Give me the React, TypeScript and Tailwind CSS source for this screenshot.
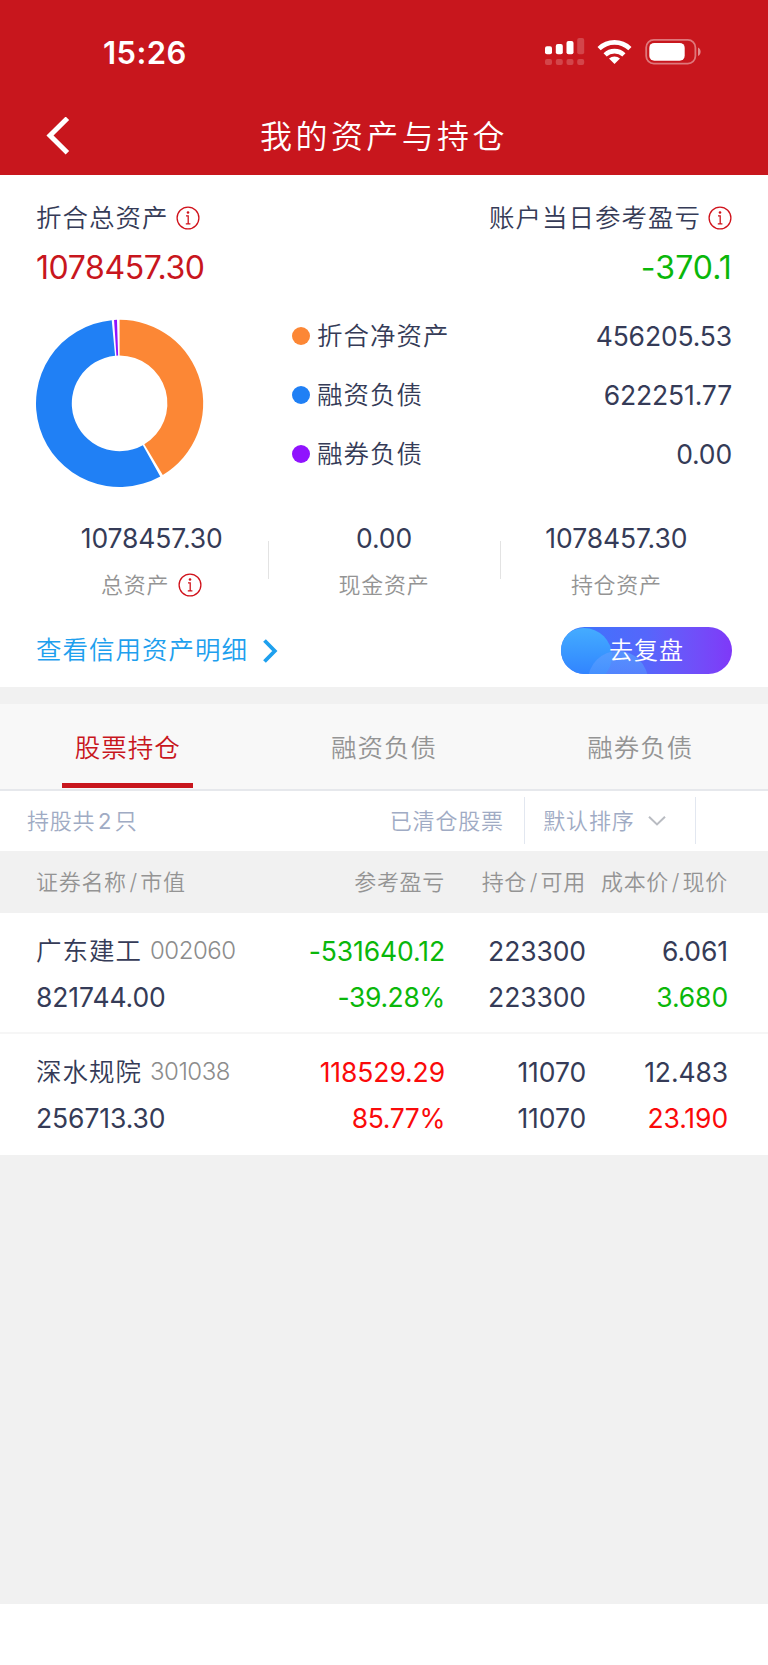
import React from "react";

interface Holding {
	name: string;
	code: string;
	value: string;
	profit: string;
	percent: string;
	amount: string;
	available: string;
	cost: string;
	price: string;
	profitColor: string;
	priceColor: string;
}

const holdings: Holding[] = [
	{
		name: "广东建工",
		code: "002060",
		value: "821744.00",
		profit: "-531640.12",
		percent: "-39.28%",
		amount: "223300",
		available: "223300",
		cost: "6.061",
		price: "3.680",
		profitColor: "text-[#0ab70a]",
		priceColor: "text-[#0ab70a]",
	},
	{
		name: "深水规院",
		code: "301038",
		value: "256713.30",
		profit: "118529.29",
		percent: "85.77%",
		amount: "11070",
		available: "11070",
		cost: "12.483",
		price: "23.190",
		profitColor: "text-[#fa0a0a]",
		priceColor: "text-[#fa0a0a]",
	},
];

const legend = [
	{ label: "折合净资产", value: "456205.53", dot: "bg-[#fc8735]" },
	{ label: "融资负债", value: "622251.77", dot: "bg-[#2080f5]" },
	{ label: "融券负债", value: "0.00", dot: "bg-[#9013fe]" },
];

const slices = [
	{ from: 0, to: 148.9, color: "#fc8735" },
	{ from: 150.9, to: 354.6, color: "#2080f5" },
	{ from: 356.2, to: 358.2, color: "#9013fe" },
];

const point = (radius: number, angle: number) => {
	const rad = (angle * Math.PI) / 180;
	return `${83.6 + radius * Math.sin(rad)} ${84.4 - radius * Math.cos(rad)}`;
};

const slicePath = (from: number, to: number) => {
	const large = to - from > 180 ? 1 : 0;
	return `M${point(83.6, from)}A83.6 83.6 0 ${large} 1 ${point(83.6, to)}L${point(47.8, to)}A47.8 47.8 0 ${large} 0 ${point(47.8, from)}Z`;
};

const Donut = () => (
	<svg className="size-[168px] shrink-0 overflow-visible" viewBox="0 0 168 168">
		{slices.map((s) => (
			<path key={s.color} d={slicePath(s.from, s.to)} fill={s.color} />
		))}
	</svg>
);

const InfoIcon = () => (
	<svg
		className="size-6 shrink-0"
		viewBox="0 0 24 24"
		fill="none"
		stroke="#d0121b"
		strokeWidth="1.3"
	>
		<circle cx="12" cy="12" r="10.9" />
		<circle cx="12" cy="6.5" r="1.3" fill="#d0121b" stroke="none" />
		<path d="M10 9.8h2.2v7.8M9.8 17.9h4.6" />
	</svg>
);

const StatusBar = () => (
	<div className="flex h-[104px] items-center pl-[103px] pr-[66px]">
		<span className="text-[31px] leading-none font-semibold tracking-[0.4px]">
			15:26
		</span>
		<svg className="ml-auto h-7 w-[158px]" viewBox="0 0 158 28" fill="#fff">
			<rect x="1" y="8.3" width="7" height="8" rx="2" />
			<rect x="11.8" y="6" width="7" height="10.3" rx="2" />
			<rect x="22.5" y="3" width="7" height="13.3" rx="2" />
			<g opacity="0.2">
				<rect x="33.2" y="0" width="7" height="16.3" rx="2" />
				<rect x="1" y="21" width="7" height="6" rx="2" />
				<rect x="11.8" y="21" width="7" height="6" rx="2" />
				<rect x="22.5" y="21" width="7" height="6" rx="2" />
				<rect x="33.2" y="21" width="7" height="6" rx="2" />
			</g>
			<path d="M70.5 26l-5.5-5.4a8 8 0 0 1 11 0z" />
			<path
				d="M61.1 16.9a13.7 13.7 0 0 1 18.8 0M55.1 10.6a22.2 22.2 0 0 1 30.8 0"
				fill="none"
				stroke="#fff"
				strokeWidth="4.6"
			/>
			<rect
				x="102.2"
				y="1.8"
				width="49.2"
				height="23.9"
				rx="7.6"
				fill="none"
				stroke="#fff"
				strokeOpacity="0.42"
				strokeWidth="1.8"
			/>
			<rect x="105.3" y="4.9" width="35.4" height="17.8" rx="5" />
			<path d="M154 9.6c3.5 1.4 3.5 7 0 8.4z" opacity="0.5" />
		</svg>
	</div>
);

const Header = () => (
	<header className="h-[174.5px] bg-[#c8161d] text-white">
		<StatusBar />
		<div className="flex h-[63px] items-center pl-[46px] pr-[72px]">
			<svg className="h-[38px] w-[26px]" viewBox="0 0 26 38">
				<path
					d="M21.4 1.3L4 18.5l17.4 17.2"
					fill="none"
					stroke="#fff"
					strokeWidth="5"
				/>
			</svg>
			<h1 className="flex-1 pt-0.5 text-center text-[32px] leading-none tracking-[3.4px]">
				我的资产与持仓
			</h1>
		</div>
	</header>
);

interface StatProps {
	value: string;
	label: string;
	info?: boolean;
}

const Stat = ({ value, label, info }: StatProps) => (
	<div className="flex flex-1 flex-col items-center">
		<span className="text-[26.5px] leading-8 font-normal tracking-[-0.1px]">
			{value}
		</span>
		<span className="mt-[15px] flex items-center gap-[9px] text-[22px] leading-8 tracking-[0.7px] text-[#949494]">
			{label}
			{info && <InfoIcon />}
		</span>
	</div>
);

const Summary = () => (
	<section className="h-[512.5px] bg-white px-9 pt-[25px]">
		<div className="flex justify-between">
			<div className="flex flex-col">
				<span className="flex items-center gap-[7px] text-[25.5px] leading-9 tracking-[1px]">
					折合总资产
					<InfoIcon />
				</span>
				<span className="mt-3 text-[32px] leading-10 font-normal tracking-[-0.4px] text-[#c8161d]">
					1078457.30
				</span>
			</div>
			<div className="flex flex-col items-end">
				<span className="flex items-center gap-[7px] text-[25.5px] leading-9 tracking-[1px]">
					账户当日参考盈亏
					<InfoIcon />
				</span>
				<span className="mt-3 text-[32px] leading-10 font-normal tracking-[0.1px] text-[#0ab70a]">
					-370.1
				</span>
			</div>
		</div>
		<div className="mt-[31px] flex">
			<Donut />
			<ul className="-mt-px ml-[88px] flex-1">
				{legend.map((item) => (
					<li key={item.label} className="flex h-[59px] items-start">
						<span className="flex flex-1 items-center text-[25.5px] leading-9 tracking-[1px]">
							<i className={`mr-[7px] size-[18px] rounded-full ${item.dot}`} />
							{item.label}
						</span>
						<span className="text-[26.5px] leading-9 font-normal tracking-[-0.15px]">
							{item.value}
						</span>
					</li>
				))}
			</ul>
		</div>
		<div className="mt-[27px] flex items-center">
			<Stat value="1078457.30" label="总资产" info />
			<div className="mt-[-2px] h-[38px] w-px translate-x-px bg-[#e3e3e3]" />
			<Stat value="0.00" label="现金资产" />
			<div className="mt-[-2px] h-[38px] w-px bg-[#e3e3e3]" />
			<Stat value="1078457.30" label="持仓资产" />
		</div>
		<div className="mt-[26px] flex h-[47px] items-center justify-between">
			<a className="flex items-center pt-px text-[25.5px] tracking-[1px] text-[#1ea0ee]">
				查看信用资产明细
				<svg className="ml-[14px] h-6 w-4" viewBox="0 0 16 24">
					<path
						d="M2.5 1.5L12.8 12 2.5 22.5"
						fill="none"
						stroke="#1ea0ee"
						strokeWidth="3.8"
					/>
				</svg>
			</a>
			<button
				type="button"
				className="relative h-[47px] w-[171px] overflow-hidden rounded-full bg-linear-to-r from-[#3377fc] via-[#5566fb] to-[#7f38f8] text-[24px] tracking-[1px] text-white"
			>
				<span className="absolute top-[1px] left-[-5px] size-[56px] rounded-full bg-linear-to-b from-[#45acff] to-[#2f7bff]" />
				<span className="absolute top-[24px] left-[27px] size-[60px] rounded-full bg-linear-to-b from-[#5a9cff]/80 to-[#4a6efc]/0" />
				<span className="relative top-px">去复盘</span>
			</button>
		</div>
	</section>
);

const Tabs = () => (
	<nav className="flex h-[87px] border-b-2 border-[#e6e8ec] bg-[#f8f8f8] text-[25.5px] leading-[87px] tracking-[1px] text-[#949494]">
		<div className="relative flex flex-1 justify-center pr-px text-[#c8161d]">
			股票持仓
			<i className="absolute bottom-px h-[5px] w-[131px] bg-[#c8161d]" />
		</div>
		<span className="flex-1 pr-px text-center">融资负债</span>
		<span className="flex-1 text-center">融券负债</span>
	</nav>
);

const FilterBar = () => (
	<div className="flex h-[60px] items-center bg-white pl-[27px] text-[22px] tracking-[0.8px] text-[#a0abc4]">
		<span>
			持股共<span className="mx-[2.5px] font-normal">2</span>只
		</span>
		<span className="ml-auto">已清仓股票</span>
		<i className="ml-5 h-[47px] w-[1.5px] -translate-y-px bg-[#e2e7f0]" />
		<span className="ml-[18px]">默认排序</span>
		<svg className="ml-[13px] h-[11px] w-[18px]" viewBox="0 0 18 11">
			<path
				d="M1 .8l8 7.6 8-7.6"
				fill="none"
				stroke="#b9bcc2"
				strokeWidth="2"
			/>
		</svg>
		<i className="mr-[72px] ml-[29px] h-[47px] w-[1.5px] -translate-y-px bg-[#e2e7f0]" />
	</div>
);

const columns = "grid grid-cols-[219px_190px_141px_142px] pl-9";

const Slash = () => <span className="mx-[2.6px]">/</span>;

const HoldingRow = ({ item }: { item: Holding }) => (
	<div
		className={`${columns} h-[121px] content-start gap-y-[10px] border-b-2 border-[#f6f6f6] bg-white pt-5 text-[26.5px] leading-9 font-normal tracking-[-0.1px] last:border-0 *:text-right`}
	>
		<span className="flex items-center whitespace-nowrap">
			<span className="text-[25.5px] font-[350] tracking-[1px]">
				{item.name}
			</span>
			<span className="ml-2 text-[24px] font-light tracking-[-0.5px] text-[#8c8c8c]">
				{item.code}
			</span>
		</span>
		<span className={item.profitColor}>{item.profit}</span>
		<span>{item.amount}</span>
		<span>{item.cost}</span>
		<span className="!text-left">{item.value}</span>
		<span className={`tracking-[-0.4px] ${item.profitColor}`}>
			{item.percent}
		</span>
		<span>{item.available}</span>
		<span className={item.priceColor}>{item.price}</span>
	</div>
);

const App = () => (
	<main className="h-[1665px] w-[768px] bg-white font-['Inter','Noto_Sans_CJK_SC',sans-serif] font-[350] text-[#353b57]">
		<Header />
		<Summary />
		<div className="h-[917px] bg-[#f1f1f1] pt-[17px]">
			<Tabs />
			<FilterBar />
			<div
				className={`${columns} h-[62px] items-center text-[22px] tracking-[0.7px] whitespace-nowrap text-[#949494]`}
			>
				<span>
					证券名称
					<Slash />
					市值
				</span>
				<span className="text-right">参考盈亏</span>
				<span className="text-right">
					持仓
					<Slash />
					可用
				</span>
				<span className="text-right">
					成本价
					<Slash />
					现价
				</span>
			</div>
			<div>
				{holdings.map((item) => (
					<HoldingRow key={item.code} item={item} />
				))}
			</div>
		</div>
	</main>
);

export default App;
